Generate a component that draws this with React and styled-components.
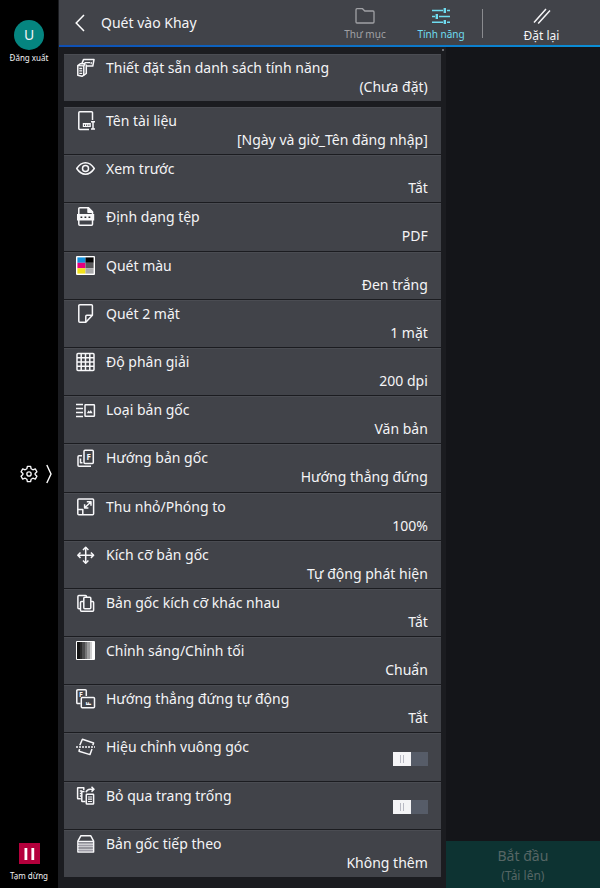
import React, { useState } from "react"
import styled, { createGlobalStyle } from "styled-components"

const Svg = ({ size = 20, children, ...rest }) => (
  <svg
    width={size}
    height={size}
    viewBox="0 0 20 20"
    fill="none"
    stroke="#f8f8fa"
    strokeWidth="1.5"
    strokeLinejoin="round"
    aria-hidden="true"
    {...rest}
  >
    {children}
  </svg>
)

const Letter = ({ x, y, size = 7, rotate }) => (
  <text
    x={x}
    y={y}
    fontSize={size}
    fontWeight="700"
    fontFamily="'Noto Sans', sans-serif"
    fill="#f8f8fa"
    stroke="none"
    transform={rotate ? `rotate(${rotate} ${x} ${y})` : undefined}
  >
    F
  </text>
)

const icons = {
  preset: (
    <Svg>
      <path d="M6 5.4L7.5 1.6H18L16.8 8H10.5" />
      <path d="M8.5 4.6H14M15.2 4V6.2" strokeWidth="1.2" />
      <path d="M1.8 7.6L4.2 5.8H9L7.8 7.8V17.2L6 18.3L1.8 17.2Z" />
      <path d="M1.8 7.6L7.8 7.8M3.3 10.5H6.2M3.3 12.9H6.2M3.3 15.3H6.2" strokeWidth="1.3" />
      <path d="M7.8 17.2L10.3 15.5V6.5" />
    </Svg>
  ),
  name: (
    <Svg>
      <path d="M16.5 9V1.8Q16.5 0.8 15.5 0.8H3.8Q2.8 0.8 2.8 1.8V17.5Q2.8 18.5 3.8 18.5H13" />
      <rect x="6.8" y="12" width="8" height="4" fill="#f8f8fa" stroke="none" />
      <path d="M8 14.3H14" stroke="#414349" strokeDasharray="1 1.2" />
      <path d="M15 10.8H19M17 10.8V18M15 18H19" />
    </Svg>
  ),
  eye: (
    <Svg>
      <path d="M0.7 9.5Q4.5 3.8 9.5 3.8T18.3 9.5Q14.5 15.2 9.5 15.2T0.7 9.5Z" />
      <circle cx="9.5" cy="9.5" r="3" />
    </Svg>
  ),
  format: (
    <Svg>
      <path d="M2.8 7V1.8Q2.8 0.8 3.8 0.8H12.5L16.5 4.8V17.2Q16.5 18.2 15.5 18.2H3.8Q2.8 18.2 2.8 17.2V13" />
      <path d="M12 0.8V5.3H16.5Z" fill="#f8f8fa" />
      <rect x="1" y="7" width="17.2" height="6.5" fill="#f8f8fa" stroke="none" />
      <path d="M4.5 10.3H15" stroke="#2b2c31" strokeWidth="1.6" strokeDasharray="1.8 2.2" />
    </Svg>
  ),
  color: (
    <Svg stroke="none">
      <rect x="0" y="0" width="19" height="19" rx="1" fill="#fff" />
      <rect x="1.4" y="1.4" width="8.1" height="5.4" fill="#1390db" />
      <rect x="9.5" y="1.4" width="8.1" height="5.4" fill="#050505" />
      <rect x="1.4" y="6.8" width="8.1" height="5.4" fill="#e6007e" />
      <rect x="9.5" y="6.8" width="8.1" height="5.4" fill="#58585a" />
      <rect x="1.4" y="12.2" width="8.1" height="5.4" fill="#f2e21c" />
      <rect x="9.5" y="12.2" width="8.1" height="5.4" fill="#aaaaac" />
    </Svg>
  ),
  duplex: (
    <Svg>
      <path d="M3.8 0.8H15.4Q16.4 0.8 16.4 1.8V11.3L9.8 18.2H3.8Q2.8 18.2 2.8 17.2V1.8Q2.8 0.8 3.8 0.8Z" />
      <path d="M9.8 18V12.3Q9.8 11.3 10.8 11.3H16.2" />
    </Svg>
  ),
  grid: (
    <Svg strokeWidth="1.5">
      <rect x="1" y="1.5" width="17" height="17" rx="1" />
      <path d="M5.2 1.5V18.5M9.5 1.5V18.5M13.8 1.5V18.5M1 5.8H18M1 10H18M1 14.2H18" />
    </Svg>
  ),
  type: (
    <Svg>
      <path d="M0 4.5H7M0 8.5H7M0 12.5H7M0 16.5H7" strokeWidth="1.3" />
      <rect x="9" y="4.8" width="9.4" height="11.5" rx="0.6" />
      <path d="M10.8 13.3L12.6 10.5L13.8 11.7L14.8 10L16.6 13.3Z" fill="#f8f8fa" stroke="none" />
    </Svg>
  ),
  direction: (
    <Svg>
      <rect x="8" y="2.2" width="9.3" height="13.4" rx="1" />
      <Letter x="10.4" y="11.8" size={8} />
      <path d="M6 7.8H3Q2 7.8 2 8.8V17.2Q2 18.2 3 18.2H15" />
      <path d="M4.5 10.5V14.8H6.5" />
    </Svg>
  ),
  scale: (
    <Svg>
      <rect x="1.8" y="2" width="15.8" height="15.8" rx="1" />
      <path d="M1.8 12.6H6.8V17.6" />
      <path d="M8.8 10.8L14.8 5M10.8 4.8H15V8.8M8.6 7.3V11H12.4" />
    </Svg>
  ),
  size: (
    <Svg>
      <path d="M9.7 2.5V18M2 10.2H17.4" />
      <path d="M7 5L9.7 2.2L12.4 5M7 15.4L9.7 18.2L12.4 15.4M4.5 7.5L1.8 10.2L4.5 12.9M14.9 7.5L17.6 10.2L14.9 12.9" />
    </Svg>
  ),
  mixed: (
    <Svg>
      <path d="M4.5 15.8H2.9Q1.9 15.8 1.9 14.8V3.5Q1.9 2.5 2.9 2.5H9.5Q10.5 2.5 10.5 3.5V4" />
      <rect x="7.8" y="4.3" width="7" height="11.5" rx="1" />
      <path d="M7.5 8.5H5.5Q4.5 8.5 4.5 9.5V17.2Q4.5 18.2 5.5 18.2H16.6Q17.6 18.2 17.6 17.2V9.5Q17.6 8.5 16.6 8.5H15" />
    </Svg>
  ),
  density: (
    <Svg stroke="none">
      <rect x="0" y="0" width="19" height="19" rx="1" fill="#fff" />
      <rect x="1" y="1" width="3" height="17" fill="#151515" />
      <rect x="4" y="1" width="2" height="17" fill="#2c2c2c" />
      <rect x="6" y="1" width="3" height="17" fill="#4c4c4d" />
      <rect x="9" y="1" width="2" height="17" fill="#747475" />
      <rect x="11" y="1" width="3" height="17" fill="#9c9c9d" />
      <rect x="14" y="1" width="2" height="17" fill="#cfcfd0" />
    </Svg>
  ),
  upright: (
    <Svg>
      <path d="M4.5 14.6H1.8Q0.8 14.6 0.8 13.6V1.8Q0.8 0.8 1.8 0.8H9.3Q10.3 0.8 10.3 1.8V7" />
      <Letter x="3" y="7.8" />
      <rect x="5.3" y="8.6" width="13.2" height="10.2" rx="1" />
      <Letter x="14.6" y="16.4" rotate={-90} />
    </Svg>
  ),
  deskew: (
    <Svg>
      <path d="M3.8 8.3L6.4 2.2L17.6 6L16.8 8.3M16 12L14 17.6L3 14.2L3.6 12" />
      <path d="M0 10H19" strokeDasharray="2 1" />
    </Svg>
  ),
  blank: (
    <Svg>
      <path d="M4.8 12.8H2Q1.6 12.8 1.6 12.3V2.3Q1.6 1.8 2 1.8H7.8V4M3.8 5H6M3.8 7.5H5.3M3.8 10H5.3" />
      <path d="M9.5 15.5H6.3Q5.8 15.5 5.8 15V6Q5.8 5.4 6.3 5.4H8.5" />
      <rect x="10.3" y="8.2" width="7.3" height="9.8" rx="0.6" />
      <path d="M12 11H16M12 13.2H16M12 15.5H16" strokeWidth="1.2" />
      <path d="M10 6.3Q11 3.2 14 3.2H17.5M15.5 0.8L18 3.2L15.5 5.6" />
    </Svg>
  ),
  stack: (
    <Svg>
      <path d="M1.9 7.2L4.8 1.8H14.8L17.6 7.2V18H1.9Z" />
      <path d="M2.5 8.8H17M2.5 11.4H17M2.5 14H17M2.5 16.6H17" stroke="#a9a7b2" strokeWidth="1" />
      <path d="M1.9 7.4H17.6M1.9 10.1H17.6M1.9 12.7H17.6M1.9 15.3H17.6" strokeWidth="1.1" />
    </Svg>
  ),
}

const settings = [
  { icon: "name", label: "Tên tài liệu", value: "[Ngày và giờ_Tên đăng nhập]" },
  { icon: "eye", label: "Xem trước", value: "Tắt" },
  { icon: "format", label: "Định dạng tệp", value: "PDF" },
  { icon: "color", label: "Quét màu", value: "Đen trắng" },
  { icon: "duplex", label: "Quét 2 mặt", value: "1 mặt" },
  { icon: "grid", label: "Độ phân giải", value: "200 dpi" },
  { icon: "type", label: "Loại bản gốc", value: "Văn bản" },
  { icon: "direction", label: "Hướng bản gốc", value: "Hướng thẳng đứng" },
  { icon: "scale", label: "Thu nhỏ/Phóng to", value: "100%" },
  { icon: "size", label: "Kích cỡ bản gốc", value: "Tự động phát hiện" },
  { icon: "mixed", label: "Bản gốc kích cỡ khác nhau", value: "Tắt" },
  { icon: "density", label: "Chỉnh sáng/Chỉnh tối", value: "Chuẩn" },
  { icon: "upright", label: "Hướng thẳng đứng tự động", value: "Tắt" },
  { icon: "deskew", label: "Hiệu chỉnh vuông góc", toggle: true },
  { icon: "blank", label: "Bỏ qua trang trống", toggle: true },
  { icon: "stack", label: "Bản gốc tiếp theo", value: "Không thêm" },
]

const SettingRow = ({ icon, label, value }) => (
  <Row type="button">
    {icons[icon]}
    <RowText>
      <span>{label}</span>
      <Value>{value}</Value>
    </RowText>
  </Row>
)

const ToggleRow = ({ icon, label }) => {
  const [on, setOn] = useState(false)

  return (
    <Row as="label">
      {icons[icon]}
      <RowText>{label}</RowText>
      <Toggle type="checkbox" checked={on} onChange={() => setOn(!on)} />
    </Row>
  )
}

const App = () => {
  const [tab, setTab] = useState("features")

  return (
    <Page>
      <GlobalStyle />
      <Sidebar>
        <SideButton type="button">
          <Avatar>U</Avatar>
          Đăng xuất
        </SideButton>
        <SettingsButton type="button" aria-label="Settings">
          <Svg size={18}>
            <path d="M8.2 1.5H11.8L12.4 4.2L14.3 5.3L17 4.4L18.8 7.5L16.8 9.4V10.6L18.8 12.5L17 15.6L14.3 14.7L12.4 15.8L11.8 18.5H8.2L7.6 15.8L5.7 14.7L3 15.6L1.2 12.5L3.2 10.6V9.4L1.2 7.5L3 4.4L5.7 5.3L7.6 4.2Z" />
            <circle cx="10" cy="10" r="2.4" />
          </Svg>
          <svg width="6" height="20" viewBox="0 0 6 20" fill="none" stroke="#fff" strokeWidth="1.4" aria-hidden="true">
            <path d="M0.8 1L5 10L0.8 19" />
          </svg>
        </SettingsButton>
        <SideButton type="button">
          <PauseMark>
            <svg width="21" height="21" viewBox="0 0 21 21" fill="#fff" aria-hidden="true">
              <rect x="5.5" y="5" width="2.8" height="12" />
              <rect x="12.4" y="5" width="2.8" height="12" />
            </svg>
          </PauseMark>
          Tạm dừng
        </SideButton>
      </Sidebar>

      <Main>
        <Header>
          <BackButton type="button" aria-label="Back">
            <svg width="10" height="18" viewBox="0 0 10 18" fill="none" stroke="#fff" strokeWidth="1.5" aria-hidden="true">
              <path d="M9 1L1.2 9L9 17" />
            </svg>
          </BackButton>
          <Title>Quét vào Khay</Title>
          <HeaderButton type="button" $active={tab === "folder"} onClick={() => setTab("folder")}>
            <svg width="20" height="16" viewBox="0 0 20 16" fill="none" stroke="currentColor" strokeWidth="1.3" aria-hidden="true">
              <path d="M1 14V1.7Q1 0.7 2 0.7H7.5L9.8 3H18Q19 3 19 4V14Q19 15 18 15H2Q1 15 1 14Z" />
            </svg>
            Thư mục
          </HeaderButton>
          <HeaderButton type="button" $active={tab === "features"} onClick={() => setTab("features")}>
            <svg width="20" height="16" viewBox="0 0 20 16" fill="none" stroke="currentColor" strokeWidth="1.4" aria-hidden="true">
              <path d="M1 2.5H12M16 2.5H19M1 8.5H4M8 8.5H19M1 14.2H12M16 14.2H19" />
              <path d="M13.8 0V5M5.8 6V11M13.8 12V16" strokeWidth="2.4" />
            </svg>
            Tính năng
          </HeaderButton>
          <Divider />
          <ResetButton type="button">
            <svg width="18" height="16" viewBox="0 0 18 16" fill="none" stroke="currentColor" strokeWidth="1.5" aria-hidden="true">
              <path d="M1 14.5L13 1M5.2 15.5L17 2.5" />
            </svg>
            Đặt lại
          </ResetButton>
        </Header>

        <Content>
          <List>
            <Group>
              <SettingRow icon="preset" label="Thiết đặt sẵn danh sách tính năng" value="(Chưa đặt)" />
            </Group>
            <Group $fill>
              {settings.map((item) =>
                item.toggle ? <ToggleRow key={item.label} {...item} /> : <SettingRow key={item.label} {...item} />
              )}
            </Group>
          </List>
          <Panel>
            <StartButton type="button" disabled>
              Bắt đầu
              <small>(Tải lên)</small>
            </StartButton>
          </Panel>
        </Content>
      </Main>
    </Page>
  )
}

export default App

const GlobalStyle = createGlobalStyle`
  * {
    box-sizing: border-box;
  }

  body {
    margin: 0;
    background: #141519;
    color: #f4f4f6;
    font-family: "Noto Sans", sans-serif;
    font-size: 14px;
  }

  button {
    border: 0;
    padding: 0;
    background: none;
    color: inherit;
    font: inherit;
    cursor: pointer;
  }

  svg {
    display: block;
    flex: none;
  }
`

const Page = styled.div`
  display: flex;
  min-height: 100vh;
`

const Sidebar = styled.nav`
  width: 58px;
  flex: none;
  display: flex;
  flex-direction: column;
  justify-content: space-between;
  padding: 20px 0 4px;
  background: #000;
`

const SideButton = styled.button`
  display: flex;
  flex-direction: column;
  align-items: center;
  width: 100%;
  font-size: 8px;
  line-height: 16px;
  white-space: nowrap;
`

const Avatar = styled.span`
  width: 30px;
  height: 30px;
  border-radius: 50%;
  background: #058580;
  font-size: 14px;
  line-height: 30px;
  text-align: center;
`

const SettingsButton = styled(SideButton)`
  flex-direction: row;
  justify-content: flex-end;
  gap: 8px;
  padding-right: 6px;
  margin-top: 38px;
`

const PauseMark = styled.span`
  background: #b4003c;
  margin-bottom: 4px;
`

const Main = styled.main`
  flex: 1;
  min-width: 0;
  display: flex;
  flex-direction: column;
  border-left: 1px solid #1b1c20;
`

const Header = styled.header`
  display: flex;
  align-items: stretch;
  height: 47px;
  background: #414349;
  border-bottom: 2px solid;
  border-image: linear-gradient(90deg, #0f4fb4, #0b8fd6) 1;
`

const BackButton = styled.button`
  display: flex;
  align-items: center;
  padding: 0 16px;
`

const Title = styled.h1`
  flex: 1;
  margin: 0;
  font-size: 14px;
  font-weight: 400;
  line-height: 45px;
  white-space: nowrap;
`

const HeaderButton = styled.button`
  width: 76px;
  display: flex;
  flex-direction: column;
  align-items: center;
  gap: 2px;
  padding-top: 8px;
  color: ${({ $active }) => ($active ? "#6fdcf0" : "#a0a1a5")};
  font-size: 10px;
  line-height: 16px;
  white-space: nowrap;
`

const Divider = styled.span`
  width: 1px;
  margin: 9px 0 7px 3px;
  background: #8a8b8f;
`

const ResetButton = styled(HeaderButton)`
  width: 117px;
  gap: 4px;
  color: #f4f4f6;
  font-size: 12px;
`

const Content = styled.div`
  flex: 1;
  display: flex;
`

const List = styled.section`
  position: relative;
  width: 71.5%;
  display: flex;
  flex-direction: column;
  gap: 6px;
  padding: 7px 5px 11px;
  background: #1b1c20;

  /* scrollbar thumb */
  &::after {
    content: "";
    position: absolute;
    top: 2px;
    right: 2px;
    width: 2px;
    height: 2px;
    background: #6a6b70;
  }
`

const Group = styled.div`
  flex: ${({ $fill }) => ($fill ? 1 : "none")};
  display: grid;
  grid-auto-rows: minmax(47px, 1fr);
  gap: 1px;
`

const Row = styled.button`
  display: flex;
  align-items: flex-start;
  gap: 10px;
  padding: 3px 13px 0 12px;
  background: #414349;
  border-top: 1px solid #4a4c52;
  text-align: left;
  line-height: 19px;
  cursor: pointer;
`

const RowText = styled.span`
  flex: 1;
  display: flex;
  flex-direction: column;
`

const Value = styled.span`
  text-align: right;
`

const Toggle = styled.input`
  appearance: none;
  align-self: center;
  width: 35px;
  height: 14px;
  margin: 0;
  background: #565c68;

  &::before {
    content: "";
    display: block;
    width: 18px;
    height: 14px;
    margin-left: ${({ checked }) => (checked ? "17px" : "0")};
    background:
      linear-gradient(#b9bac4, #b9bac4) 7px 3px / 1px 8px no-repeat,
      linear-gradient(#b9bac4, #b9bac4) 10px 3px / 1px 8px no-repeat,
      #f4f4f6;
  }
`

const Panel = styled.aside`
  flex: 1;
  display: flex;
  flex-direction: column;
  justify-content: flex-end;
`

const StartButton = styled.button`
  display: flex;
  flex-direction: column;
  align-items: center;
  gap: 2px;
  padding: 5px 0 4px;
  background: #0d3332;
  color: #566665;
  line-height: 20px;

  small {
    font-size: 12px;
    line-height: 16px;
  }
`
